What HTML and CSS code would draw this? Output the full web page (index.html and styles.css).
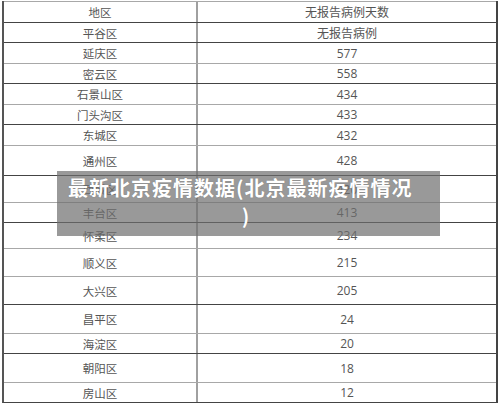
FILE: index.html
```html
<!DOCTYPE html>
<html lang="zh">
<head>
<meta charset="utf-8">
<link rel="stylesheet" href="styles.css">
</head>
<body>
<div class="sheet">
  <div class="row g h21"><div class="c1">地区</div><div class="c2">无报告病例天数</div></div>
  <div class="row h20"><div class="c1">平谷区</div><div class="c2">无报告病例</div></div>
  <div class="row h21"><div class="c1">延庆区</div><div class="c2">577</div></div>
  <div class="row g h20"><div class="c1">密云区</div><div class="c2">558</div></div>
  <div class="row h21"><div class="c1">石景山区</div><div class="c2">434</div></div>
  <div class="row g h20"><div class="c1">门头沟区</div><div class="c2">433</div></div>
  <div class="row h21"><div class="c1">东城区</div><div class="c2">432</div></div>
  <div class="row g h30"><div class="c1">通州区</div><div class="c2">428</div></div>
  <div class="row h27"><div class="c1">西城区</div><div class="c2">420</div></div>
  <div class="row g h20"><div class="c1">丰台区</div><div class="c2">413</div></div>
  <div class="row h26"><div class="c1">怀柔区</div><div class="c2">234</div></div>
  <div class="row g h28"><div class="c1">顺义区</div><div class="c2">215</div></div>
  <div class="row g h28"><div class="c1">大兴区</div><div class="c2">205</div></div>
  <div class="row h29"><div class="c1">昌平区</div><div class="c2">24</div></div>
  <div class="row g h20"><div class="c1">海淀区</div><div class="c2">20</div></div>
  <div class="row h29"><div class="c1">朝阳区</div><div class="c2">18</div></div>
  <div class="row g h20"><div class="c1">房山区</div><div class="c2">12</div></div>
  <div class="banner">
    <span class="line1">最新北京疫情数据(北京最新疫情情况</span>
    <span class="line2">)</span>
  </div>
</div>
</body>
</html>
```

FILE: styles.css
```css
html, body {
  margin: 0;
  padding: 0;
  background: #ffffff;
}
body {
  padding-top: 1px;
  font-family: "Noto Sans CJK SC", "Open Sans", sans-serif;
}
.sheet {
  position: relative;
  margin-left: 2px;
  width: 496px;
  box-sizing: border-box;
  border-left: 2px solid #555555;
  border-right: 2px solid #444444;
  border-bottom: 1px solid #444444;
}
.row {
  display: flex;
  box-sizing: border-box;
  border-top: 1px solid #444444;
  font-size: 11.5px;
  color: #555555;
}
.row.g {
  border-top-color: #a8a8a8;
}
.h20 { height: 20px; }
.h21 { height: 21px; }
.h26 { height: 26px; }
.h27 { height: 27px; }
.h28 { height: 28px; }
.h29 { height: 29px; }
.h30 { height: 30px; }
.c1, .c2 {
  display: flex;
  align-items: center;
  justify-content: center;
}
.c1 {
  width: 194px;
  box-sizing: border-box;
  border-right: 2px solid #a0a0a0;
}
.c2 {
  flex: 1;
  font-family: "Open Sans", "Noto Sans CJK SC", sans-serif;
  font-size: 12px;
}
.banner {
  position: absolute;
  left: 53px;
  top: 170px;
  width: 383px;
  height: 65px;
  box-sizing: border-box;
  padding: 3px 16px 0 11px;
  background: rgba(110, 110, 110, 0.7);
  color: #ffffff;
  font-family: "Noto Sans CJK SC", sans-serif;
  font-weight: 700;
  font-size: 20px;
  line-height: 28px;
  letter-spacing: 1px;
  text-shadow: 0 0 1px rgba(0, 0, 0, 0.25);
}
.line1 {
  display: block;
  white-space: nowrap;
}
.line2 {
  display: block;
  text-align: center;
}
```
